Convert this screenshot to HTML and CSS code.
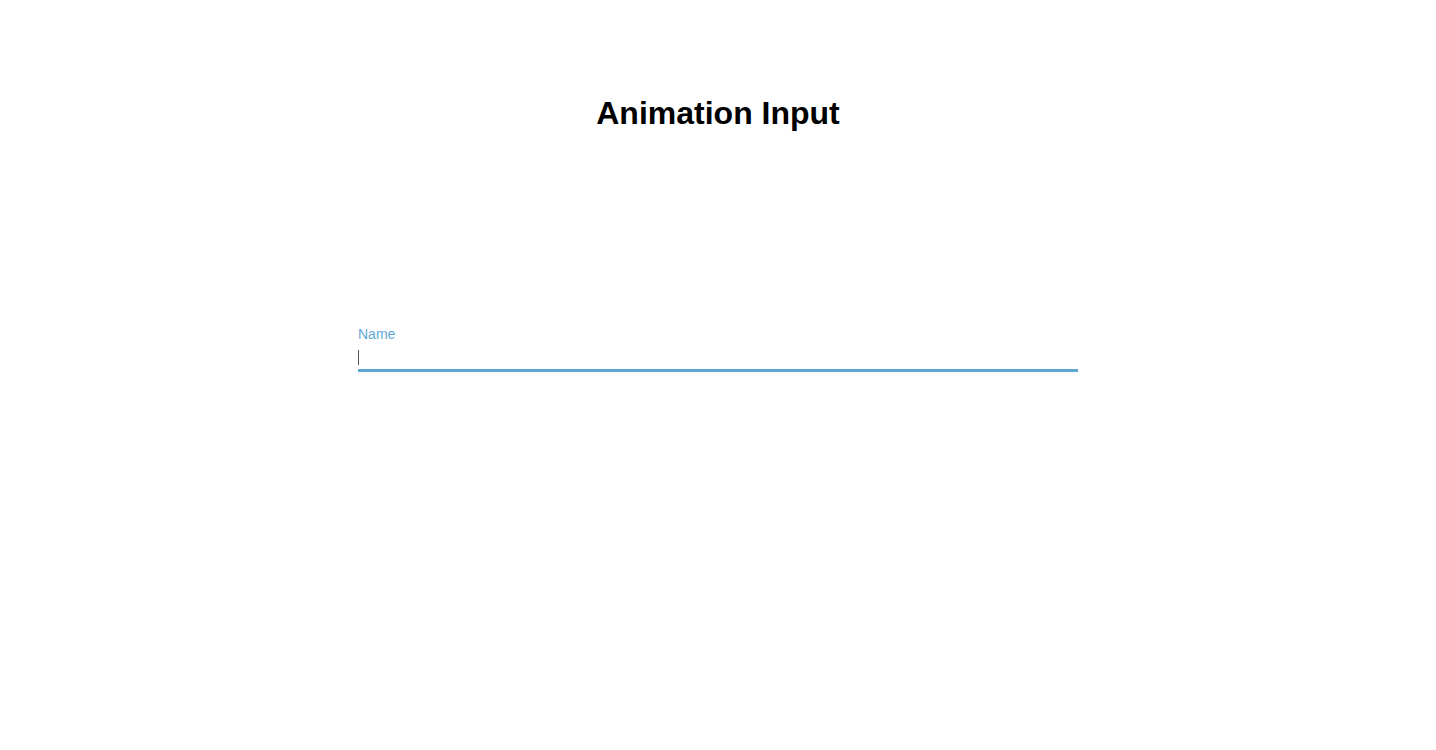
FILE: index.html
```html
<!DOCTYPE html>
<html lang="en">
<head>
    <meta charset="UTF-8">
    <meta name="viewport" content="width=device-width, initial-scale=1.0">
    <title>Animation Input</title>
    <link rel="stylesheet" href="styles.css">
</head>
<body>

    <h1 class="title">Animation Input</h1>

    <form class="form">
        <div class="form-group">
            <label class="form-label" for="name">Name</label>
            <input class="form-input" type="text" id="name" name="name" placeholder=" " autocomplete="off" autofocus>
        </div>
    </form>

</body>
</html>
```

FILE: styles.css
```css
* {
    box-sizing: border-box;
}

body {
    margin: 0;
    padding: 94px 16px 0;
    font-family: Arial, "Liberation Sans", sans-serif;
    background-color: #fff;
    color: #000;
}

.title {
    margin: 0;
    font-size: 32px;
    line-height: 38px;
    text-align: center;
}

.form {
    max-width: 720px;
    margin: 194px auto 0;
}

.form-group {
    display: flex;
    flex-direction: column;
}

.form-label {
    font-size: 14px;
    line-height: 16px;
    color: #5fa8d3;
    transition: all 0.3s ease;
}

.form-input {
    width: 100%;
    height: 30px;
    padding: 0;
    border: none;
    border-bottom: 3px solid #5fa8d3;
    outline: none;
    font-family: inherit;
    font-size: 14px;
    color: #333;
    background-color: transparent;
}

/* thin caret while the field is empty */
.form-input:placeholder-shown {
    caret-color: transparent;
    background-image: linear-gradient(#555, #555);
    background-size: 1px 15px;
    background-position: 0 8px;
    background-repeat: no-repeat;
}
```
